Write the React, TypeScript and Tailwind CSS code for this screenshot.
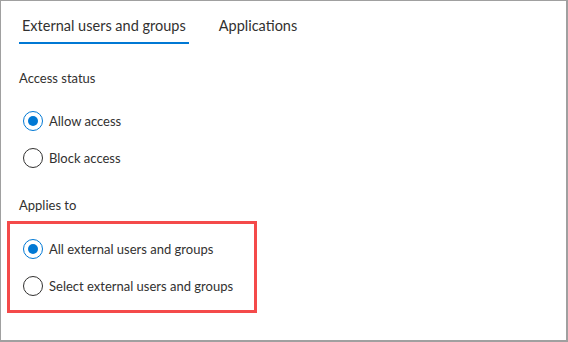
import React from 'react'

function Radio({ checked, label }: { checked?: boolean; label: string }) {
  return (
    <div className="flex h-5 items-center gap-[6px]">
      <span
        className={`flex h-5 w-5 items-center justify-center rounded-full border ${checked ? 'border-[#0078d4]' : 'border-[#323130]'}`}
      >
        {checked && <span className="h-[10px] w-[10px] rounded-full bg-[#0078d4]" />}
      </span>
      <span className="leading-5">{label}</span>
    </div>
  )
}

export default function App() {
  return (
    <div className="h-[342px] w-[568px] border-b-2 border-l border-r-2 border-t border-[#a0a0a0] bg-white font-['Lato',sans-serif] text-[13px] text-[#323130]">
      <div className="flex gap-[27px] pl-[18px] pt-[15px] text-[14.5px]">
        <div className="border-b-2 border-[#0078d4] px-[3px] pb-[6px] leading-5">External users and groups</div>
        <div className="px-[3px] leading-5">Applications</div>
      </div>

      <div className="px-[6px]">
        <div className="mt-[24px] pl-[12px] leading-5">Access status</div>
        <div className="mt-[23px] flex flex-col gap-[17px] pl-[16px]">
          <Radio checked label="Allow access" />
          <Radio label="Block access" />
        </div>

        <div className="mt-[27px] pl-[12px] leading-5">Applies to</div>
        <div className="mt-[6px] flex w-[250px] flex-col gap-[17px] border-[3px] border-[#f44a4a] pb-[14px] pl-[13px] pt-[15px]">
          <Radio checked label="All external users and groups" />
          <Radio label="Select external users and groups" />
        </div>
      </div>
    </div>
  )
}
